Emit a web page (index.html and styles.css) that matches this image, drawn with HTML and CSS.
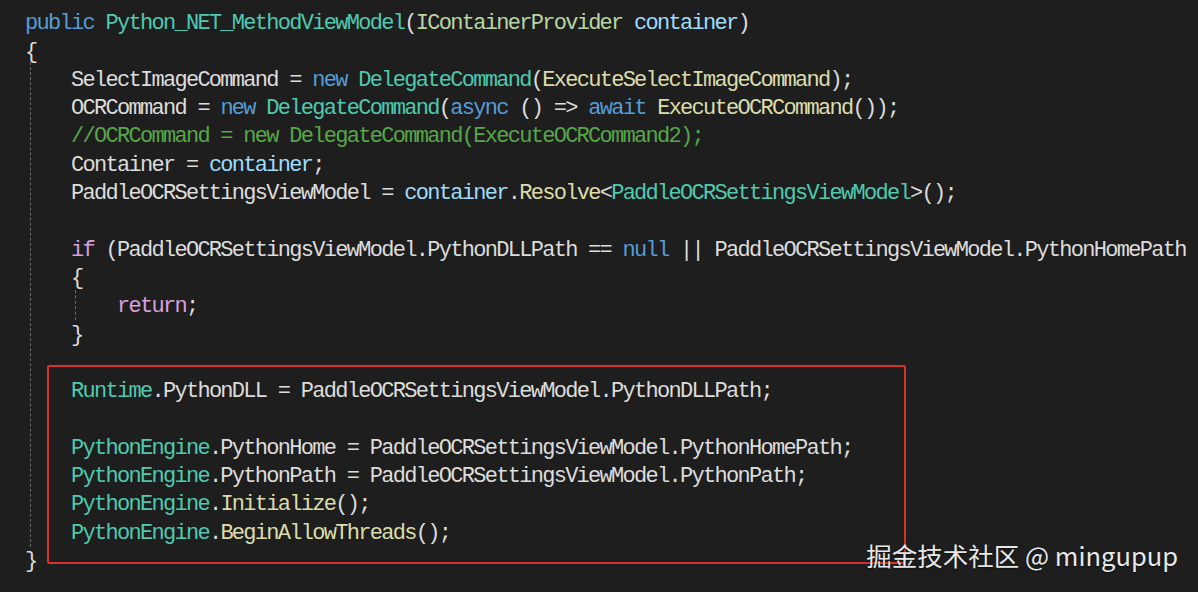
FILE: index.html
```html
<!DOCTYPE html>
<html>
<head>
<meta charset="utf-8">
<link rel="stylesheet" href="styles.css">
</head>
<body>
<div class="editor">
  <div class="code">
    <div class="line cm-top">// 构造函数</div>
    <div class="line"><span class="kw">public</span> <span class="ty">Python_NET_MethodViewModel</span>(<span class="if">IContainerProvider</span> <span class="pa">container</span>)</div>
    <div class="line">{</div>
    <div class="line">    SelectImageCommand = <span class="kw">new</span> <span class="ty">DelegateCommand</span>(<span class="me">ExecuteSelectImageCommand</span>);</div>
    <div class="line">    OCRCommand = <span class="kw">new</span> <span class="ty">DelegateCommand</span>(<span class="kw">async</span> () =&gt; <span class="kw">await</span> <span class="me">ExecuteOCRCommand</span>());</div>
    <div class="line"><span class="cm">    //OCRCommand = new DelegateCommand(ExecuteOCRCommand2);</span></div>
    <div class="line">    Container = <span class="pa">container</span>;</div>
    <div class="line">    PaddleOCRSettingsViewModel = <span class="pa">container</span>.<span class="me">Resolve</span>&lt;<span class="ty">PaddleOCRSettingsViewModel</span>&gt;();</div>
    <div class="line"> </div>
    <div class="line">    <span class="ct">if</span> (PaddleOCRSettingsViewModel.PythonDLLPath == <span class="kw">null</span> || PaddleOCRSettingsViewModel.PythonHomePath == <span class="kw">null</span>)</div>
    <div class="line">    {</div>
    <div class="line">        <span class="ct">return</span>;</div>
    <div class="line">    }</div>
    <div class="line"> </div>
    <div class="line">    <span class="ty">Runtime</span>.PythonDLL = PaddleOCRSettingsViewModel.PythonDLLPath;</div>
    <div class="line"> </div>
    <div class="line">    <span class="ty">PythonEngine</span>.PythonHome = PaddleOCRSettingsViewModel.PythonHomePath;</div>
    <div class="line">    <span class="ty">PythonEngine</span>.PythonPath = PaddleOCRSettingsViewModel.PythonPath;</div>
    <div class="line">    <span class="ty">PythonEngine</span>.<span class="me">Initialize</span>();</div>
    <div class="line">    <span class="ty">PythonEngine</span>.<span class="me">BeginAllowThreads</span>();</div>
    <div class="line">}</div>
    <div class="guide guide-outer"></div>
    <div class="guide guide-inner"></div>
    <div class="highlight-box"></div>
  </div>
  <div class="watermark">掘金技术社区 @ mingupup</div>
</div>
</body>
</html>
```
FILE: styles.css
```css
html, body {
  margin: 0;
  padding: 0;
  background: #1e1e1e;
  overflow: hidden;
}
.editor {
  position: relative;
  width: 1198px;
  height: 592px;
  overflow: hidden;
  background: #1e1e1e;
}
.code {
  position: relative;
  margin-top: -18px;
  padding-left: 25px;
  font-family: "Liberation Mono", monospace;
  font-size: 22px;
  letter-spacing: -1.71px;
  color: #dcdcdc;
}
.line {
  height: 28.3px;
  line-height: 28.3px;
  white-space: pre;
}
.cm-top {
  line-height: 20px;
  color: #b8b8b8;
  letter-spacing: 0;
  font-family: "Liberation Mono", "Noto Sans CJK SC", sans-serif;
}
.kw { color: #569cd6; }
.ty { color: #4ec9b0; }
.if { color: #b8d7a3; }
.pa { color: #9cdcfe; }
.me { color: #dcdcaa; }
.cm { color: #57a64a; }
.ct { color: #d8a0df; }
.guide {
  position: absolute;
  width: 0;
  border-left: 1px dashed #6a6a6a;
}
.guide-outer {
  left: 30px;
  top: 80px;
  height: 485px;
}
.guide-inner {
  left: 75px;
  top: 308px;
  height: 30px;
}
.highlight-box {
  position: absolute;
  left: 47px;
  top: 383px;
  width: 855px;
  height: 195px;
  border: 2px solid #d8302b;
  border-radius: 2px;
}
.watermark {
  position: absolute;
  right: 20px;
  top: 536px;
  font-family: "Noto Sans CJK SC", "Noto Sans", sans-serif;
  font-size: 25.5px;
  color: #e8e8e8;
  text-shadow: 0 1px 2px rgba(0,0,0,0.6);
  white-space: nowrap;
}
```
